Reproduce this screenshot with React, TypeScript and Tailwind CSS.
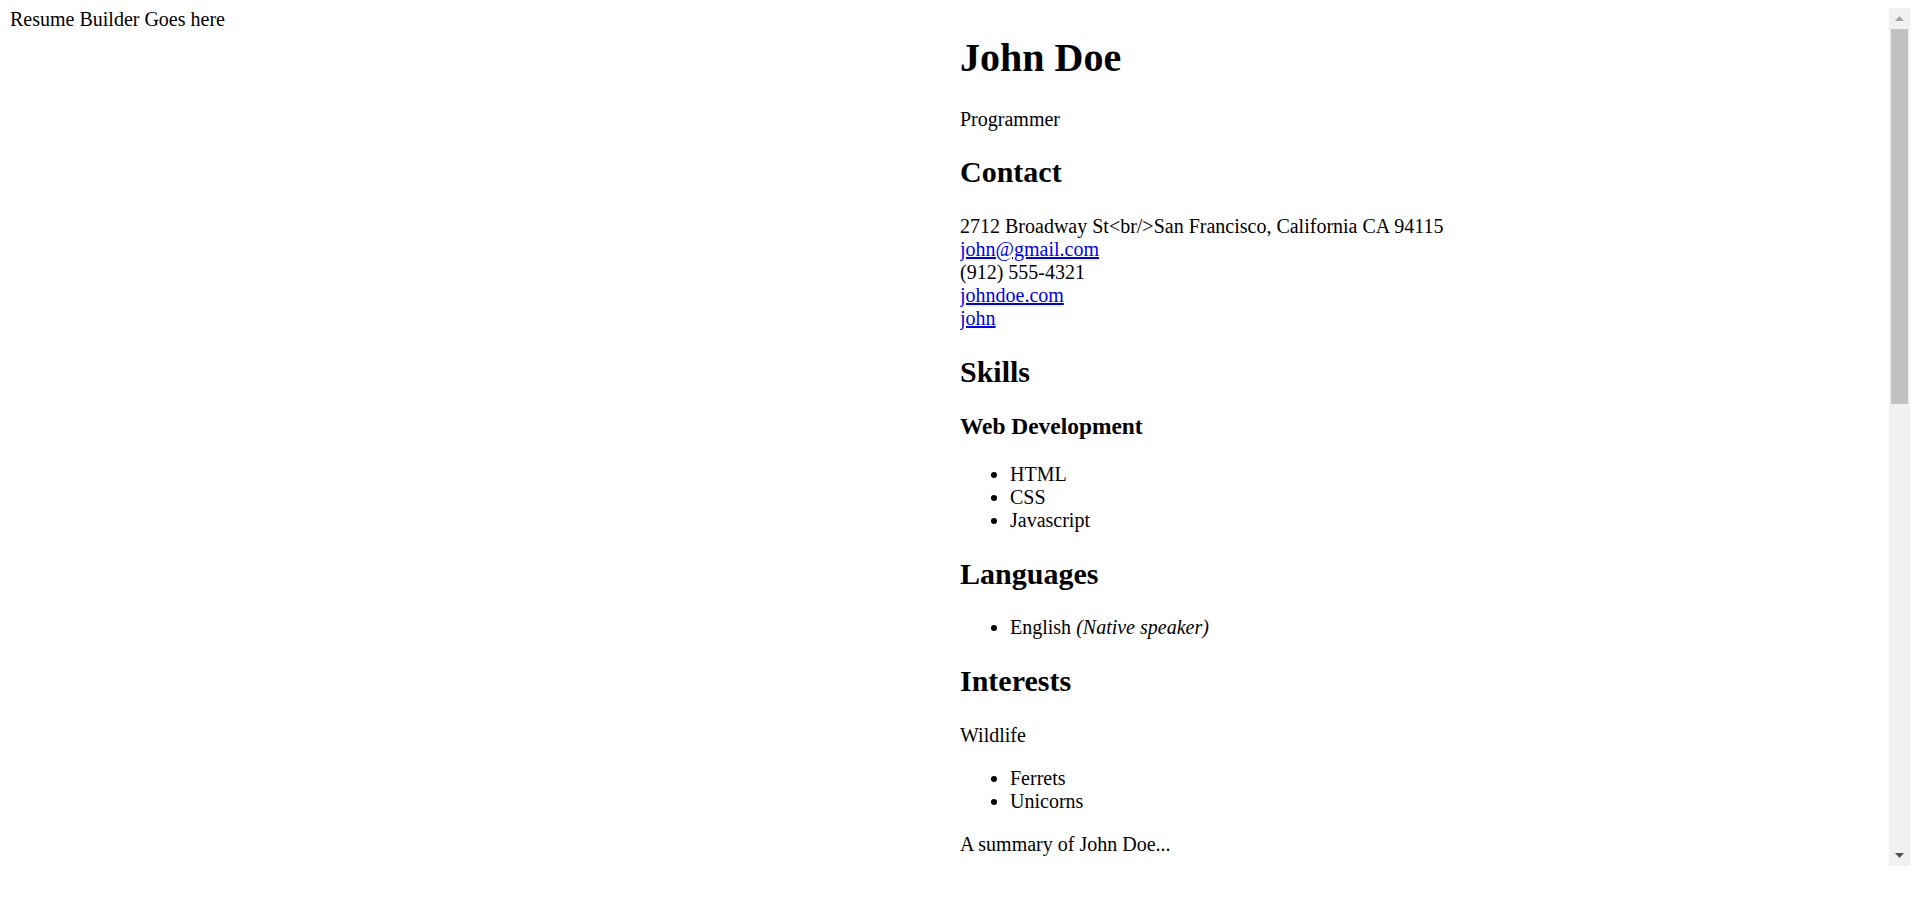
const serif = "font-['Liberation_Serif','Times_New_Roman',serif]";

function Scrollbar() {
  return (
    <div className="flex w-[21px] shrink-0 flex-col bg-[#f1f1f1]">
      <div className="flex h-[21px] items-center justify-center">
        <svg width="9" height="5" viewBox="0 0 9 5">
          <path d="M4.5 0 9 5H0Z" fill="#a3a3a3" />
        </svg>
      </div>
      <div className="flex-1 px-[2px]">
        <div className="h-[375px] bg-[#c1c1c1]" />
      </div>
      <div className="flex h-[21px] items-center justify-center">
        <svg width="9" height="5" viewBox="0 0 9 5">
          <path d="M0 0h9L4.5 5Z" fill="#505050" />
        </svg>
      </div>
    </div>
  );
}

const link = "text-[#0000ee] underline";

export default function App() {
  return (
    <div className={`${serif} flex min-h-screen bg-white pt-[8px] text-[20px] leading-[23px] text-black`}>
      {/* Builder */}
      <div className="w-[960px] shrink-0 pl-[10px]">Resume Builder Goes here</div>

      {/* Preview */}
      <div className="flex h-[858px] w-[950px] shrink-0">
        <div className="min-w-0 flex-1 overflow-hidden">
          <h1 className="mt-[26.8px] mb-[26.8px] text-[40px] leading-[46px] font-bold">John Doe</h1>
          <p className="mb-[24.9px]">Programmer</p>

          <h2 className="mb-[24.9px] text-[30px] leading-[34.5px] font-bold">Contact</h2>
          <div className="mb-[24.9px] flex flex-col">
            <span>2712 Broadway St&lt;br/&gt;San Francisco, California CA 94115</span>
            <a href="#" className={`${link} self-start`}>john@gmail.com</a>
            <span>(912) 555-4321</span>
            <a href="#" className={`${link} self-start`}>johndoe.com</a>
            <a href="#" className={`${link} self-start`}>john</a>
          </div>

          <h2 className="mb-[23.4px] text-[30px] leading-[34.5px] font-bold">Skills</h2>
          <h3 className="mb-[23.4px] text-[23.4px] leading-[26.9px] font-bold">Web Development</h3>
          <ul className="mb-[24.9px] list-disc pl-[50px]">
            <li>HTML</li>
            <li>CSS</li>
            <li>Javascript</li>
          </ul>

          <h2 className="mb-[24.9px] text-[30px] leading-[34.5px] font-bold">Languages</h2>
          <ul className="mb-[24.9px] list-disc pl-[50px]">
            <li>
              English <em className="italic">(Native speaker)</em>
            </li>
          </ul>

          <h2 className="mb-[24.9px] text-[30px] leading-[34.5px] font-bold">Interests</h2>
          <p className="mb-[20px]">Wildlife</p>
          <ul className="mb-[20px] list-disc pl-[50px]">
            <li>Ferrets</li>
            <li>Unicorns</li>
          </ul>
          <p className="mb-[20px]">A summary of John Doe...</p>
        </div>
        <Scrollbar />
      </div>
    </div>
  );
}
